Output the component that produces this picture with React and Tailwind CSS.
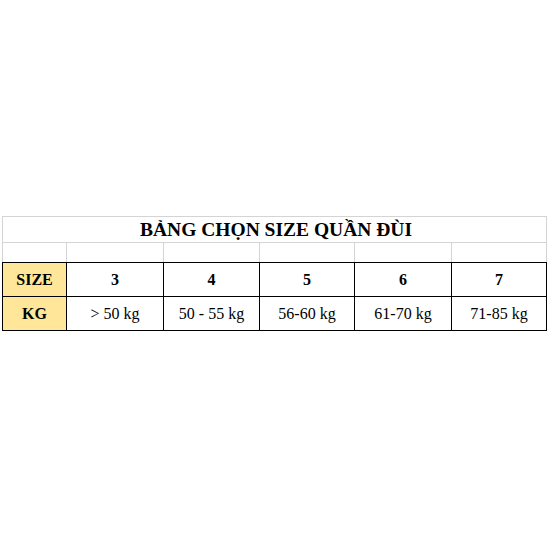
import React from "react";

const widths = ["w-[65px]", "w-[97px]", "w-[96px]", "w-[95px]", "w-[97px]", "w-[95px]"];
const sizes = ["3", "4", "5", "6", "7"];
const weights = ["> 50 kg", "50 - 55 kg", "56-60 kg", "61-70 kg", "71-85 kg"];

function Cell({ i, children, className = "" }) {
  return (
    <div
      className={`${widths[i]} shrink-0 ${i === 0 ? "border-l" : ""} border-r flex items-center justify-center ${className}`}
    >
      {children}
    </div>
  );
}

export default function App() {
  return (
    <div className="w-[549px] h-[549px] bg-white pt-[216px] pl-[2px] text-black font-['Liberation_Serif','Times_New_Roman',serif]">
      {/* Title row */}
      <div className="w-[545px] h-[26px] border-t border-x border-[#d4d4d4] flex items-center justify-center">
        <span className="text-[19.5px] font-bold leading-none pt-[1px] pl-[3px]">BẢNG CHỌN SIZE QUẦN ĐÙI</span>
      </div>

      {/* Empty spacer row */}
      <div className="flex w-[545px] h-[20px] border-t border-[#d4d4d4]">
        {widths.map((w, i) => (
          <Cell key={i} i={i} className="border-[#d4d4d4]" />
        ))}
      </div>

      {/* Size row */}
      <div className="flex w-[545px] h-[34px] border-t border-black">
        <Cell i={0} className="border-black bg-[#ffe699] font-bold text-[16px]">SIZE</Cell>
        {sizes.map((s, k) => (
          <Cell key={s} i={k + 1} className="border-black font-bold text-[16px]">
            {s}
          </Cell>
        ))}
      </div>

      {/* Weight row */}
      <div className="flex w-[545px] h-[35px] border-y border-black">
        <Cell i={0} className="border-black bg-[#ffe699] font-bold text-[16px]">KG</Cell>
        {weights.map((w, k) => (
          <Cell key={w} i={k + 1} className="border-black text-[16px]">
            {w}
          </Cell>
        ))}
      </div>
    </div>
  );
}
